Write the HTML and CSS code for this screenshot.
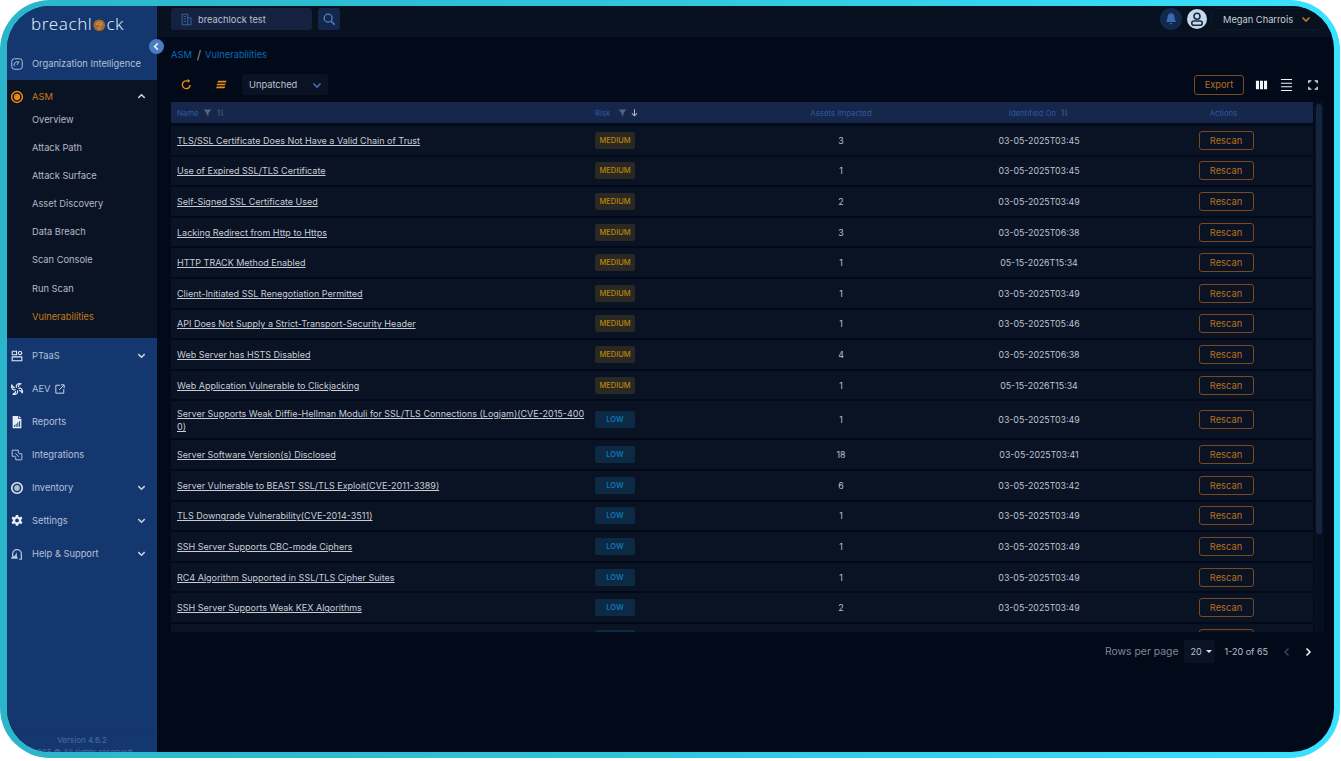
FILE: index.html
```html
<!DOCTYPE html>
<html lang="en">
<head>
    <meta charset="UTF-8">
    <meta name="viewport" content="width=device-width, initial-scale=1.0">
    <title>BreachLock - Vulnerabilities</title>
    <link rel="stylesheet" href="styles.css">
</head>
<body>
    <svg class="sprite" width="0" height="0">
        <symbol id="chev-down" viewBox="0 0 12 12"><path d="M2.5 4.5 6 8l3.5-3.5" fill="none" stroke="currentColor" stroke-width="1.6"/></symbol>
        <symbol id="chev-up" viewBox="0 0 12 12"><path d="M2.5 7.5 6 4l3.5 3.5" fill="none" stroke="currentColor" stroke-width="1.6"/></symbol>
        <symbol id="filter" viewBox="0 0 12 12"><path d="M1 2h10L7.3 6.5V10.500L4.700 9V6.500z" fill="currentColor"/></symbol>
        <symbol id="sort" viewBox="0 0 12 12"><path d="M4 10.500V2L2.200 4M8 1.500V10l1.800-2" fill="none" stroke="currentColor" stroke-width="1"/></symbol>
    </svg>
    <div class="frame">
        <div class="app">
            <aside class="sidebar">
                <div class="logo">breachl<svg class="logo-o" viewBox="0 0 16 16"><circle cx="8" cy="8" r="7.500" fill="#a8682c"/><path d="M4 8a4 4 0 0 1 8 0M5.500 11.500a4.500 4.500 0 0 0 5 0M6.500 8a1.500 1.500 0 0 1 3 0c0 1-.5 2-1 2.500" fill="none" stroke="#e0a86e" stroke-width="1"/></svg>ck</div>
                <a class="nav-item org-item">
                    <svg class="nav-icon" viewBox="0 0 16 16"><rect x="2" y="2" width="12" height="12" rx="3" fill="none" stroke="currentColor" stroke-width="1.100"/><path d="M5 10.500a3.500 3.500 0 0 1 5-4.500M8 9l2.500-4" fill="none" stroke="currentColor" stroke-width="1.100"/></svg>
                    <span>Organization Intelligence</span>
                </a>
                <div class="nav-section">
                    <a class="nav-item section-head">
                        <svg class="nav-icon" viewBox="0 0 16 16"><circle cx="8" cy="8" r="6.200" fill="none" stroke="#f08a12" stroke-width="1.700"/><circle cx="8" cy="8" r="3.600" fill="#f08a12"/><path d="M5.800 8A2.200 2.200 0 0 1 8 5.800 3 3 0 0 0 5.800 8z" fill="#0a1324"/></svg>
                        <span>ASM</span>
                        <svg class="nav-chev up"><use href="#chev-up"/></svg>
                    </a>
                    <a class="sub-item first">Overview</a>
                    <a class="sub-item">Attack Path</a>
                    <a class="sub-item">Attack Surface</a>
                    <a class="sub-item">Asset Discovery</a>
                    <a class="sub-item">Data Breach</a>
                    <a class="sub-item">Scan Console</a>
                    <a class="sub-item">Run Scan</a>
                    <a class="sub-item active">Vulnerabilities</a>
                </div>
                <a class="nav-item">
                    <svg class="nav-icon white" viewBox="0 0 16 16"><path d="M2.500 2.500h5v4h-5M2.500 9h11v4.500h-11zM2.500 2.500v4" fill="none" stroke="currentColor" stroke-width="1.200"/><rect x="9.500" y="2.800" width="4" height="3.600" rx="1.800" fill="none" stroke="currentColor" stroke-width="1.200"/></svg>
                    <span>PTaaS</span>
                    <svg class="nav-chev"><use href="#chev-down"/></svg>
                </a>
                <a class="nav-item">
                    <svg class="nav-icon white" viewBox="0 0 16 16"><path d="M7.500 6.500C6 3.500 9 .8 13 2c-2 .2-3.200 1.200-3.500 3.500M9.500 7.500c3-1.500 5.700 1.500 4.500 5.500-.2-2-1.200-3.200-3.500-3.500M8.500 9.500c1.500 3-1.500 5.700-5.500 4.500 2-.2 3.200-1.200 3.500-3.500M6.500 8.500C3.500 10 .8 7 2 3c.2 2 1.200 3.200 3.500 3.500" fill="none" stroke="currentColor" stroke-width="1.300"/></svg>
                    <span>AEV</span>
                    <svg class="ext-icon" viewBox="0 0 12 12"><path d="M6 1.500H1v9.500h9.500V6M5 7l5.500-5.500M7 1h4v4" fill="none" stroke="currentColor" stroke-width="1.100"/></svg>
                </a>
                <a class="nav-item">
                    <svg class="nav-icon white" viewBox="0 0 16 16"><path d="M3 1h6.500v3.500H13V15H3zM10.300 1 13 3.700h-2.700z" fill="currentColor"/><path d="M5 13.500v-2M7 13.500V10M9 13.500V8.500M11 13.500V7" stroke="#15376f" stroke-width="1.100"/></svg>
                    <span>Reports</span>
                </a>
                <a class="nav-item">
                    <svg class="nav-icon" viewBox="0 0 16 16"><path d="M9.500 6V2.500h-7v7H6M6.500 10v3.500h7v-7H10M6 6l4 4" fill="none" stroke="currentColor" stroke-width="1.100"/></svg>
                    <span>Integrations</span>
                </a>
                <a class="nav-item">
                    <svg class="nav-icon white" viewBox="0 0 16 16"><circle cx="8" cy="8" r="6" fill="none" stroke="currentColor" stroke-width="1.800"/><circle cx="8" cy="8" r="3.300" fill="#a9bbd6"/></svg>
                    <span>Inventory</span>
                    <svg class="nav-chev"><use href="#chev-down"/></svg>
                </a>
                <a class="nav-item">
                    <svg class="nav-icon white" viewBox="0 0 16 16"><path d="M6.700 1h2.600l.4 2 1.300.7 1.900-.8 1.300 2.300-1.500 1.300v1.500l1.500 1.300-1.300 2.300-1.900-.8-1.300.7-.4 2H6.700l-.4-2-1.300-.7-1.900.8-1.300-2.300 1.500-1.300V6.500L1.800 5.200l1.300-2.300 1.900.8 1.300-.7z" fill="currentColor"/><circle cx="8" cy="7.300" r="2.100" fill="#15376f"/></svg>
                    <span>Settings</span>
                    <svg class="nav-chev"><use href="#chev-down"/></svg>
                </a>
                <a class="nav-item">
                    <svg class="nav-icon" viewBox="0 0 16 16"><path d="M3 11V8a5 5 0 0 1 10 0v6h-2.500" fill="none" stroke="currentColor" stroke-width="1.400"/><path d="M1 13.500c.5-2.500 2.500-3.500 4.500-3.500l2-4 .5 4.500 1 3z" fill="currentColor"/></svg>
                    <span>Help &amp; Support</span>
                    <svg class="nav-chev"><use href="#chev-down"/></svg>
                </a>
                <div class="side-foot">
                    <div>Version 4.6.2</div>
                    <div>2025 © All rights reserved</div>
                </div>
            </aside>
            <button class="collapse-btn"><svg viewBox="0 0 12 12"><path d="M7.500 2.500 4 6l3.500 3.500" fill="none" stroke="currentColor" stroke-width="1.800"/></svg></button>
            <div class="main">
                <header class="topbar">
                    <div class="org-select">
                        <svg viewBox="0 0 16 16"><path d="M2.500 14.500V1.500h7v13zM9.500 6h4v8.500h-4M4.500 4.500h3M4.500 7.500h3M4.500 10.500h3" fill="none" stroke="currentColor" stroke-width="1"/></svg>
                        <span>breachlock test</span>
                    </div>
                    <button class="search-btn"><svg viewBox="0 0 16 16"><circle cx="7" cy="7" r="4.500" fill="none" stroke="currentColor" stroke-width="1.500"/><path d="m10.500 10.500 4 4" stroke="currentColor" stroke-width="1.800"/></svg></button>
                    <div class="top-right">
                        <span class="bell"><svg viewBox="0 0 16 16"><path d="M8 1.500c-2.500 0-4 2-4 4.500 0 3-1.500 4.500-1.500 5.500h11c0-1-1.500-2.500-1.500-5.500 0-2.500-1.500-4.500-4-4.500zM6.500 12.500a1.500 1.500 0 0 0 3 0z" fill="currentColor"/></svg></span>
                        <span class="avatar"><svg viewBox="0 0 20 20"><circle cx="10" cy="10" r="10" fill="#c4d9ee"/><circle cx="10" cy="7.300" r="3" fill="none" stroke="#1c2a40" stroke-width="1.600"/><rect x="4.800" y="12" width="10.400" height="4.200" rx="2" fill="none" stroke="#1c2a40" stroke-width="1.600"/></svg></span>
                        <div class="user-pill">
                            <span>Megan Charrois</span>
                            <svg><use href="#chev-down"/></svg>
                        </div>
                    </div>
                </header>
                <nav class="breadcrumb"><a>ASM</a><span class="sep">/</span><a>Vulnerabilities</a></nav>
                <div class="toolbar">
                    <svg class="tool-icon refresh" viewBox="0 0 16 16"><path d="M12.500 8.500A4.800 4.800 0 1 1 8 3.500h3" fill="none" stroke="currentColor" stroke-width="1.700"/><path d="M9.500 0.800 12.500 3.500 9.500 6z" fill="currentColor"/></svg>
                    <svg class="tool-icon layers" viewBox="0 0 16 16"><path d="M4 3.500h10.500L13 5.500H2.500zM3 7h10.500L12 9H1.500zM2.500 10.500H13L11.500 12.500H1z" fill="currentColor"/></svg>
                    <div class="status-select">
                        <span>Unpatched</span>
                        <svg><use href="#chev-down"/></svg>
                    </div>
                    <div class="tool-right">
                        <button class="export-btn">Export</button>
                        <svg class="view-icon columns" viewBox="0 0 14 12"><path d="M1 1.500h3.300v9H1zM5.350 1.500h3.300v9h-3.300zM9.700 1.500H13v9H9.700z" fill="currentColor"/></svg>
                        <svg class="view-icon density" viewBox="0 0 14 14"><path d="M1 1h12M1 5h12M1 9h12M1 13h12" stroke="currentColor" stroke-width="1.100"/></svg>
                        <svg class="view-icon full" viewBox="0 0 12 12"><path d="M1 4V1h3M8 1h3v3M11 8v3H8M4 11H1V8" fill="none" stroke="currentColor" stroke-width="1.500"/></svg>
                    </div>
                </div>
                <div class="table-wrap">
                    <div class="table">
                        <div class="thead">
                            <div class="th">Name <svg class="th-icon"><use href="#filter"/></svg><svg class="th-icon"><use href="#sort"/></svg></div>
                            <div class="th">Risk <svg class="th-icon risk-filter"><use href="#filter"/></svg><svg class="th-icon arrow" viewBox="0 0 12 12"><path d="M6 1.500v9M2.500 7 6 10.500 9.500 7" fill="none" stroke="currentColor" stroke-width="1.400"/></svg></div>
                            <div class="th center">Assets Impacted</div>
                            <div class="th center">Identified On <svg class="th-icon"><use href="#sort"/></svg></div>
                            <div class="th center th-actions">Actions</div>
                        </div>
                        <div class="row"><a class="name">TLS/SSL Certificate Does Not Have a Valid Chain of Trust</a><div><span class="badge medium">MEDIUM</span></div><div class="cell">3</div><div class="cell">03-05-2025T03:45</div><div class="cell"><button class="rescan">Rescan</button></div></div>
                        <div class="row"><a class="name">Use of Expired SSL/TLS Certificate</a><div><span class="badge medium">MEDIUM</span></div><div class="cell">1</div><div class="cell">03-05-2025T03:45</div><div class="cell"><button class="rescan">Rescan</button></div></div>
                        <div class="row"><a class="name">Self-Signed SSL Certificate Used</a><div><span class="badge medium">MEDIUM</span></div><div class="cell">2</div><div class="cell">03-05-2025T03:49</div><div class="cell"><button class="rescan">Rescan</button></div></div>
                        <div class="row"><a class="name">Lacking Redirect from Http to Https</a><div><span class="badge medium">MEDIUM</span></div><div class="cell">3</div><div class="cell">03-05-2025T06:38</div><div class="cell"><button class="rescan">Rescan</button></div></div>
                        <div class="row"><a class="name">HTTP TRACK Method Enabled</a><div><span class="badge medium">MEDIUM</span></div><div class="cell">1</div><div class="cell">05-15-2026T15:34</div><div class="cell"><button class="rescan">Rescan</button></div></div>
                        <div class="row"><a class="name">Client-Initiated SSL Renegotiation Permitted</a><div><span class="badge medium">MEDIUM</span></div><div class="cell">1</div><div class="cell">03-05-2025T03:49</div><div class="cell"><button class="rescan">Rescan</button></div></div>
                        <div class="row"><a class="name">API Does Not Supply a Strict-Transport-Security Header</a><div><span class="badge medium">MEDIUM</span></div><div class="cell">1</div><div class="cell">03-05-2025T05:46</div><div class="cell"><button class="rescan">Rescan</button></div></div>
                        <div class="row"><a class="name">Web Server has HSTS Disabled</a><div><span class="badge medium">MEDIUM</span></div><div class="cell">4</div><div class="cell">03-05-2025T06:38</div><div class="cell"><button class="rescan">Rescan</button></div></div>
                        <div class="row"><a class="name">Web Application Vulnerable to Clickjacking</a><div><span class="badge medium">MEDIUM</span></div><div class="cell">1</div><div class="cell">05-15-2026T15:34</div><div class="cell"><button class="rescan">Rescan</button></div></div>
                        <div class="row tall"><a class="name">Server Supports Weak Diffie-Hellman Moduli for SSL/TLS Connections (Logjam)(CVE-2015-4000)</a><div><span class="badge low">LOW</span></div><div class="cell">1</div><div class="cell">03-05-2025T03:49</div><div class="cell"><button class="rescan">Rescan</button></div></div>
                        <div class="row"><a class="name">Server Software Version(s) Disclosed</a><div><span class="badge low">LOW</span></div><div class="cell">18</div><div class="cell">03-05-2025T03:41</div><div class="cell"><button class="rescan">Rescan</button></div></div>
                        <div class="row"><a class="name">Server Vulnerable to BEAST SSL/TLS Exploit(CVE-2011-3389)</a><div><span class="badge low">LOW</span></div><div class="cell">6</div><div class="cell">03-05-2025T03:42</div><div class="cell"><button class="rescan">Rescan</button></div></div>
                        <div class="row"><a class="name">TLS Downgrade Vulnerability(CVE-2014-3511)</a><div><span class="badge low">LOW</span></div><div class="cell">1</div><div class="cell">03-05-2025T03:49</div><div class="cell"><button class="rescan">Rescan</button></div></div>
                        <div class="row"><a class="name">SSH Server Supports CBC-mode Ciphers</a><div><span class="badge low">LOW</span></div><div class="cell">1</div><div class="cell">03-05-2025T03:49</div><div class="cell"><button class="rescan">Rescan</button></div></div>
                        <div class="row"><a class="name">RC4 Algorithm Supported in SSL/TLS Cipher Suites</a><div><span class="badge low">LOW</span></div><div class="cell">1</div><div class="cell">03-05-2025T03:49</div><div class="cell"><button class="rescan">Rescan</button></div></div>
                        <div class="row"><a class="name">SSH Server Supports Weak KEX Algorithms</a><div><span class="badge low">LOW</span></div><div class="cell">2</div><div class="cell">03-05-2025T03:49</div><div class="cell"><button class="rescan">Rescan</button></div></div>
                        <div class="row"><span class="name"></span><div><span class="badge low"></span></div><div class="cell"></div><div class="cell"></div><div class="cell"><button class="rescan"></button></div></div>
                    </div>
                    <div class="scrollbar"><div class="scroll-thumb"></div></div>
                </div>
                <div class="pagination">
                    <span class="rows-label">Rows per page</span>
                    <div class="rows-select">20 <i class="caret"></i></div>
                    <span class="range">1-20 of 65</span>
                    <svg class="page-btn off" viewBox="0 0 12 12"><path d="M7.500 2.500 4 6l3.500 3.500" fill="none" stroke="currentColor" stroke-width="1.500"/></svg>
                    <svg class="page-btn" viewBox="0 0 12 12"><path d="M4.500 2.500 8 6l-3.500 3.500" fill="none" stroke="currentColor" stroke-width="1.600"/></svg>
                </div>
            </div>
        </div>
    </div>
</body>
</html>
```

FILE: styles.css
```css
* {
    box-sizing: border-box;
}
html, body {
    margin: 0;
    height: 100%;
    background-color: #ffffff;
    overflow: hidden;
}
body {
    font-family: Inter, "Noto Sans", sans-serif;
    font-size: 9px;
}
button {
    font-family: inherit;
}
.sprite {
    position: absolute;
}
.frame {
    width: 1340px;
    height: 758px;
    padding: 6px 6px 6px 7px;
    border-radius: 50px;
    background: linear-gradient(90deg, #2bb5ca 0%, #2fc4da 45%, #39e2ff 100%);
}
.app {
    position: relative;
    display: flex;
    height: 100%;
    border-radius: 43px;
    overflow: hidden;
    background-color: #020a1a;
}

/* sidebar */
.sidebar {
    width: 150px;
    flex-shrink: 0;
    display: flex;
    flex-direction: column;
    background-color: #15376f;
    color: #b3c1d8;
    overflow: hidden;
}
.logo {
    display: flex;
    align-items: center;
    height: 41px;
    padding: 0 0 6px 24px;
    font-family: "Noto Sans", sans-serif;
    font-size: 17px;
    font-weight: 300;
    letter-spacing: 0.6px;
    color: #dfe7f2;
}
.logo-o {
    width: 12.500px;
    height: 12.500px;
    margin: 3px 0.500px 0 1px;
}
.nav-item {
    display: flex;
    align-items: center;
    height: 33px;
    flex-shrink: 0;
    padding: 0 10px 0 3px;
    font-size: 9.300px;
    white-space: nowrap;
}
.nav-icon {
    width: 14px;
    height: 14px;
    margin-right: 8px;
    flex-shrink: 0;
    color: #b3c6e0;
}
.nav-icon.white {
    color: #e8eef6;
}
.nav-chev {
    width: 11px;
    height: 11px;
    margin-left: auto;
    color: #c6d2e4;
}
.ext-icon {
    width: 10px;
    height: 10px;
    margin-left: 5px;
    color: #dbe4f0;
}
.org-item {
    height: 33px;
}
.nav-section {
    height: 258px;
    flex-shrink: 0;
    background-color: #0a1324;
}
.nav-section + .nav-item {
    margin-top: 1px;
}
.section-head {
    color: #c87a1a;
}
.sub-item {
    display: flex;
    align-items: center;
    height: 28.200px;
    padding-left: 25px;
    font-size: 9.300px;
    color: #b2b9c4;
}
.sub-item.first {
    height: 19px;
    margin-top: -3px;
    margin-bottom: 4px;
}
.sub-item.active {
    color: #c87a1a;
}
.side-foot {
    margin-top: auto;
    height: 24px;
    padding-top: 5px;
    border-top: 1px solid #14336a;
    text-align: center;
    font-size: 8px;
    line-height: 12px;
    color: #4a6ba6;
    white-space: nowrap;
}
.collapse-btn {
    position: absolute;
    left: 142px;
    top: 33px;
    width: 15px;
    height: 15px;
    padding: 2px;
    border: none;
    border-radius: 50%;
    background-color: #4a7cc2;
    color: #e6eef8;
}
.collapse-btn svg {
    display: block;
}

/* main area */
.main {
    flex: 1;
    min-width: 0;
    display: flex;
    flex-direction: column;
}
.topbar {
    display: flex;
    align-items: center;
    height: 31px;
    flex-shrink: 0;
    padding: 0 10px 5px 14px;
    background-color: #081120;
}
.org-select {
    display: flex;
    align-items: center;
    width: 141px;
    height: 22px;
    padding-left: 9px;
    border-radius: 3px;
    background-color: #14223f;
    color: #b9c2d0;
    font-size: 9.300px;
}
.org-select svg {
    width: 13px;
    height: 13px;
    margin-right: 5px;
    color: #3f73b8;
}
.search-btn {
    width: 22px;
    height: 22px;
    margin-left: 6px;
    padding: 4px;
    border: none;
    border-radius: 3px;
    background-color: #14274a;
    color: #4e84cc;
}
.search-btn svg {
    display: block;
}
.top-right {
    display: flex;
    align-items: center;
    margin-left: auto;
}
.bell {
    width: 22px;
    height: 22px;
    padding: 4px;
    border-radius: 50%;
    background-color: #12294f;
    color: #3d68ae;
}
.bell svg, .avatar svg {
    display: block;
}
.avatar {
    width: 20px;
    height: 20px;
    margin-left: 5px;
}
.user-pill {
    display: flex;
    align-items: center;
    width: 113px;
    height: 22px;
    margin-left: 4px;
    padding: 0 11px;
    border: 1px solid #0d1a2e;
    border-radius: 6px;
    color: #c5ccd8;
    font-size: 9.300px;
    white-space: nowrap;
}
.user-pill svg {
    width: 12px;
    height: 12px;
    margin-left: auto;
    color: #c87a1a;
}
.breadcrumb {
    display: flex;
    align-items: center;
    height: 17px;
    margin: 9px 0 0 14px;
    font-size: 9.300px;
    color: #0b6bb5;
}
.breadcrumb .sep {
    margin: 0 4px 0 5px;
    font-size: 12px;
    color: #8b95a6;
}
.toolbar {
    display: flex;
    align-items: center;
    height: 21px;
    margin: 11px 0 0 14px;
}
.tool-icon {
    width: 13px;
    height: 13px;
    color: #ee8a14;
}
.refresh {
    margin-left: 9px;
}
.layers {
    margin-left: 22px;
}
.status-select {
    display: flex;
    align-items: center;
    width: 86px;
    height: 21px;
    margin-left: 14px;
    padding: 0 5px 0 7px;
    border-radius: 3px;
    background-color: #0a1324;
    color: #b9c2d0;
    font-size: 9.300px;
}
.status-select svg {
    width: 12px;
    height: 12px;
    margin-left: auto;
    color: #3f6fb3;
}
.tool-right {
    display: flex;
    align-items: center;
    margin-left: auto;
    padding-right: 16px;
}
.export-btn {
    width: 50px;
    height: 20px;
    padding: 0;
    border: 1px solid #7a4a1e;
    border-radius: 3px;
    background: none;
    color: #b8701c;
    font-size: 9.300px;
}
.view-icon {
    color: #f2f4f8;
}
.columns {
    width: 13px;
    height: 12px;
    margin-left: 11px;
}
.density {
    width: 13px;
    height: 14px;
    margin-left: 12px;
}
.full {
    width: 10px;
    height: 10px;
    margin-left: 15px;
}

/* table */
.table-wrap {
    display: flex;
    height: 530px;
    flex-shrink: 0;
    margin: 7px 0 0 14px;
    overflow: hidden;
}
.table {
    width: 1142px;
    flex-shrink: 0;
}
.thead, .row {
    display: grid;
    grid-template-columns: 418px 158px 188px 208px 166px;
    align-items: center;
}
.thead {
    height: 21px;
    margin-bottom: 3px;
    background-color: #16274b;
}
.th {
    display: flex;
    align-items: center;
    padding-left: 6px;
    font-size: 7.800px;
    color: #2f5a9e;
}
.th.center {
    justify-content: center;
    padding-left: 0;
}
.th.th-actions {
    padding-right: 5px;
}
.th-icon {
    width: 9px;
    height: 9px;
    margin-left: 4px;
    color: #56667f;
}
.th-icon.risk-filter {
    margin-left: 8px;
}
.th-icon.arrow {
    color: #b6c0d0;
    margin-left: 3px;
}
.row {
    height: 28.600px;
    margin-bottom: 2px;
    background-color: #0a1324;
}
.row.tall {
    height: 37px;
}
.name {
    padding: 0 0 0 6px;
    font-size: 9px;
    line-height: 13px;
    color: #c8cdd5;
    text-decoration: underline;
    word-break: break-all;
}
.badge {
    display: block;
    width: 40px;
    height: 17px;
    margin-left: 6px;
    border-radius: 2px;
    text-align: center;
    font-size: 7.500px;
    font-weight: 500;
    line-height: 17px;
}
.badge.medium {
    background-color: #2a2822;
    color: #b8860b;
}
.badge.low {
    background-color: #0c2a44;
    color: #0f75b5;
    font-weight: 600;
}
.cell {
    text-align: center;
    font-size: 8.800px;
    color: #bcc3cf;
}
.rescan {
    width: 55px;
    height: 19px;
    padding: 0;
    border: 1px solid #7a4a1e;
    border-radius: 3px;
    background: none;
    color: #b8701c;
    font-size: 9.300px;
    vertical-align: middle;
}
.scrollbar {
    width: 10px;
    margin-left: 1px;
    padding: 2px;
    background-color: #060f20;
}
.scroll-thumb {
    width: 6px;
    height: 430px;
    border-radius: 3px;
    background-color: #15243f;
}

/* pagination */
.pagination {
    display: flex;
    align-items: center;
    height: 23px;
    margin-top: 8px;
    padding-right: 20px;
    justify-content: flex-end;
    font-size: 9px;
    color: #b9c0cc;
}
.rows-label {
    font-size: 10.400px;
    color: #7f8897;
}
.rows-select {
    display: flex;
    align-items: center;
    width: 31px;
    height: 23px;
    margin-left: 6px;
    padding-left: 6px;
    border-radius: 3px;
    background-color: #0a1324;
}
.caret {
    width: 0;
    height: 0;
    margin-left: 4px;
    border: 3px solid transparent;
    border-top: 3px solid #e2e6ec;
    border-bottom: 0;
}
.range {
    margin-left: 9px;
    margin-right: 13px;
}
.page-btn {
    width: 12px;
    height: 12px;
    color: #eef1f5;
}
.page-btn + .page-btn {
    margin-left: 9px;
}
.page-btn.off {
    color: #3a4454;
}
```
